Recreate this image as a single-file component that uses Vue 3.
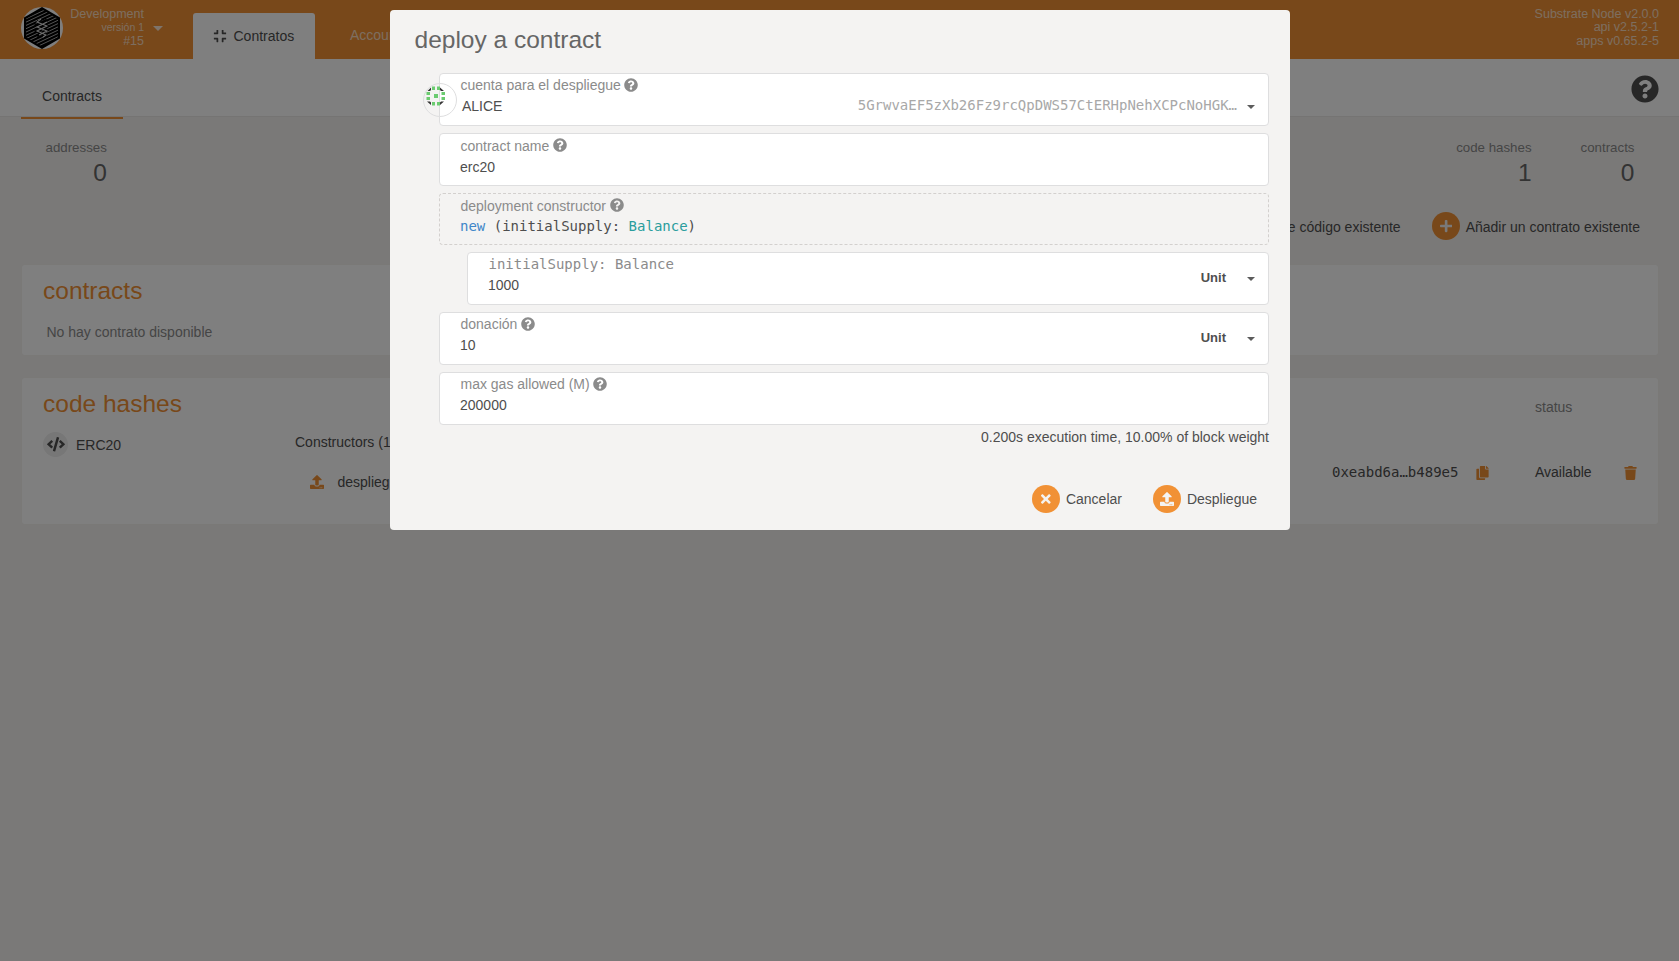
<script setup>
import { h } from 'vue'

const glyphs = {
  help: [512, 'M504 256c0 136.997-111.043 248-248 248S8 392.997 8 256C8 119.083 119.043 8 256 8s248 111.083 248 248zM262.655 90c-54.497 0-89.255 22.957-116.549 63.758-3.536 5.286-2.353 12.415 2.715 16.258l34.699 26.31c5.205 3.947 12.621 3.008 16.665-2.122 17.864-22.658 30.113-35.797 57.303-35.797 20.429 0 45.698 13.148 45.698 32.958 0 14.976-12.363 22.667-32.534 33.976C247.128 238.528 216 254.941 216 296v4c0 6.627 5.373 12 12 12h56c6.627 0 12-5.373 12-12v-1.333c0-28.462 83.186-29.647 83.186-106.667 0-58.002-60.165-102-116.531-102zM256 338c-25.365 0-46 20.635-46 46 0 25.364 20.635 46 46 46s46-20.636 46-46c0-25.365-20.635-46-46-46z'],
  upload: [512, 'M296 384h-80c-13.3 0-24-10.7-24-24V192h-87.7c-17.8 0-26.7-21.5-14.1-34.1L242.3 5.7c7.5-7.5 19.8-7.5 27.3 0l152.2 152.2c12.6 12.6 3.7 34.1-14.1 34.1H320v168c0 13.3-10.7 24-24 24zm216-8v112c0 13.3-10.7 24-24 24H24c-13.3 0-24-10.7-24-24V376c0-13.3 10.7-24 24-24h136v8c0 30.9 25.1 56 56 56h80c30.9 0 56-25.1 56-56v-8h136c13.3 0 24 10.7 24 24zm-124 88c0-11-9-20-20-20s-20 9-20 20 9 20 20 20 20-9 20-20zm64 0c0-11-9-20-20-20s-20 9-20 20 9 20 20 20 20-9 20-20z'],
  times: [352, 'M242.72 256l100.07-100.07c12.28-12.28 12.28-32.19 0-44.48l-22.24-22.24c-12.28-12.28-32.19-12.28-44.48 0L176 189.28 75.93 89.21c-12.28-12.28-32.19-12.28-44.48 0L9.21 111.45c-12.28 12.28-12.28 32.19 0 44.48L109.28 256 9.21 356.07c-12.28 12.28-12.28 32.19 0 44.48l22.24 22.24c12.28 12.28 32.2 12.28 44.48 0L176 322.72l100.07 100.07c12.28 12.28 32.2 12.28 44.48 0l22.24-22.24c12.28-12.28 12.28-32.19 0-44.48L242.72 256z'],
  plus: [448, 'M416 208H272V64c0-17.67-14.33-32-32-32h-32c-17.67 0-32 14.33-32 32v144H32c-17.67 0-32 14.33-32 32v32c0 17.67 14.33 32 32 32h144v144c0 17.67 14.33 32 32 32h32c17.67 0 32-14.33 32-32V304h144c17.67 0 32-14.33 32-32v-32c0-17.67-14.33-32-32-32z'],
  code: [640, 'M278.9 511.5l-61-17.7c-6.4-1.8-10-8.5-8.2-14.9L346.2 8.7c1.8-6.4 8.5-10 14.9-8.2l61 17.7c6.4 1.8 10 8.5 8.2 14.9L293.8 503.3c-1.9 6.4-8.5 10.1-14.9 8.2zm-114-112.2l43.5-46.4c4.6-4.9 4.3-12.7-.8-17.2L117 256l90.6-79.7c5.1-4.5 5.5-12.3.8-17.2l-43.5-46.4c-4.5-4.8-12.1-5.1-17-.5L3.8 247.2c-5.1 4.7-5.1 12.8 0 17.5l144.1 135.1c4.9 4.6 12.5 4.4 17-.5zm327.2.6l144.1-135.1c5.1-4.7 5.1-12.8 0-17.5L492.1 112.1c-4.8-4.5-12.4-4.3-17 .5L431.6 159c-4.6 4.9-4.3 12.7.8 17.2L523 256l-90.6 79.7c-5.1 4.5-5.5 12.3-.8 17.2l43.5 46.4c4.5 4.9 12.1 5.1 17 .6z'],
  copy: [448, 'M320 448v40c0 13.255-10.745 24-24 24H24c-13.255 0-24-10.745-24-24V120c0-13.255 10.745-24 24-24h72v296c0 30.879 25.121 56 56 56h168zm0-344V0H152c-13.255 0-24 10.745-24 24v368c0 13.255 10.745 24 24 24h272c13.255 0 24-10.745 24-24V128H344c-13.2 0-24-10.8-24-24zm120.971-31.029L375.029 7.029A24 24 0 0 0 358.059 0H352v96h96v-6.059a24 24 0 0 0-7.029-16.97z'],
  trash: [448, 'M432 32H312l-9.4-18.7A24 24 0 0 0 281.1 0H166.8a23.72 23.72 0 0 0-21.4 13.3L136 32H16A16 16 0 0 0 0 48v32a16 16 0 0 0 16 16h416a16 16 0 0 0 16-16V48a16 16 0 0 0-16-16zM53.2 467a48 48 0 0 0 47.9 45h245.8a48 48 0 0 0 47.9-45L416 128H32z'],
  compress: [448, 'M436 192H312c-13.3 0-24-10.7-24-24V44c0-6.6 5.4-12 12-12h40c6.6 0 12 5.4 12 12v84h84c6.6 0 12 5.4 12 12v40c0 6.6-5.4 12-12 12zm-276-24V44c0-6.6-5.4-12-12-12h-40c-6.6 0-12 5.4-12 12v84H12c-6.6 0-12 5.4-12 12v40c0 6.6 5.4 12 12 12h124c13.3 0 24-10.7 24-24zm0 300V344c0-13.3-10.7-24-24-24H12c-6.6 0-12 5.4-12 12v40c0 6.6 5.4 12 12 12h84v84c0 6.6 5.4 12 12 12h40c6.6 0 12-5.4 12-12zm192 0v-84h84c6.6 0 12-5.4 12-12v-40c0-6.6-5.4-12-12-12H312c-13.3 0-24 10.7-24 24v124c0 6.6 5.4 12 12 12h40c6.6 0 12-5.4 12-12z'],
}

const Icon = (props) =>
  h('svg', { viewBox: `0 0 ${glyphs[props.name][0]} 512`, fill: 'currentColor' }, [
    h('path', { d: glyphs[props.name][1] }),
  ])
Icon.props = ['name']

const hatch = Array.from({ length: 13 }, (_, i) => 1 + i * 3.3)
</script>

<template>
  <div class="page">
    <header class="topbar">
      <svg class="logo" viewBox="0 0 42 42">
        <defs>
          <clipPath id="hex"><path d="M21 2.5 37 11.7v18.6L21 39.5 5 30.300V11.700Z" /></clipPath>
        </defs>
        <circle cx="21" cy="21" r="21" fill="#fff" />
        <path d="M21 0 39 10.500v21L21 42 3 31.500v-21Z" fill="#000" />
        <g clip-path="url(#hex)" stroke="#bbb" stroke-width=".9">
          <path v-for="y in hatch" :key="y" :d="`M4 ${y + 8}L38 ${y - 8}`" />
        </g>
        <path d="M16 14l10 5-10 5 10 5M26 13l-10 5 10 5-10 6" fill="none" stroke="#000" stroke-width="3" />
        <path d="M20 12l-4 3 10 4-10 5 9 4-3 2M26 15l-10 5 10 4-8 4" fill="none" stroke="#ddd" stroke-width="1.100" />
      </svg>
      <div class="chain">
        <div>Development</div>
        <div class="small">versión 1</div>
        <div>#15</div>
      </div>
      <i class="caret head-caret"></i>
      <div class="app-tab"><Icon name="compress" />Contratos</div>
      <div class="app-link">Accounts</div>
      <div class="versions">
        <div>Substrate Node v2.0.0</div>
        <div>api v2.5.2-1</div>
        <div>apps v0.65.2-5</div>
      </div>
    </header>

    <nav class="subbar">
      <div class="subtab">Contracts</div>
      <Icon name="help" class="big-help" />
    </nav>

    <section class="summary">
      <div class="stat first"><span>addresses</span><b>0</b></div>
      <div class="stat"><span>code hashes</span><b>1</b></div>
      <div class="stat"><span>contracts</span><b>0</b></div>
    </section>

    <div class="actions">
      <button><em><Icon name="plus" /></em><span>Añadir hash de código existente</span></button>
      <button><em><Icon name="plus" /></em><span>Añadir un contrato existente</span></button>
    </div>

    <section class="card contracts">
      <h2>contracts</h2>
      <p>No hay contrato disponible</p>
    </section>

    <section class="card codes">
      <div class="codes-head"><h2>code hashes</h2><span>status</span></div>
      <div class="codes-row">
        <div class="name"><em><Icon name="code" /></em>ERC20</div>
        <div class="ctors">
          <div>Constructors (1)</div>
          <div class="deploy"><Icon name="upload" />despliegue</div>
        </div>
        <div class="hash">0xeabd6a…b489e5<Icon name="copy" /></div>
        <div class="status">Available</div>
        <Icon name="trash" class="trash" />
      </div>
    </section>
  </div>

  <div class="dimmer">
    <div class="modal">
      <h1>deploy a contract</h1>

      <div class="field account">
        <div class="identicon">
          <svg viewBox="0 0 20 20">
            <path d="M1.500 5 5 1.500V4L4 5ZM14 1.500 18 5h-3l-1-1ZM1 15.500h3l1 1V19ZM15 15.500h3L14 19v-2.500Z" fill="#333" />
            <g fill="#6bcb70">
              <rect x="6" y=".5" width="3" height="3.500" /><rect x="11" y=".5" width="3" height="3.500" />
              <rect x="6" y="16" width="3" height="3.500" /><rect x="11" y="16" width="3" height="3.500" />
              <rect x=".5" y="6" width="3.500" height="3" /><rect x=".5" y="11" width="3.500" height="3" />
              <rect x="15.500" y="6" width="3.500" height="3" /><rect x="15.500" y="11" width="3.500" height="3" />
              <rect x="8" y="8" width="4" height="4" />
            </g>
          </svg>
        </div>
        <label>cuenta para el despliegue<Icon name="help" /></label>
        <div class="value">ALICE</div>
        <div class="side"><span class="address">5GrwvaEF5zXb26Fz9rcQpDWS57CtERHpNehXCPcNoHGK…</span><i class="caret"></i></div>
      </div>

      <div class="field low">
        <label>contract name<Icon name="help" /></label>
        <div class="value">erc20</div>
      </div>

      <div class="field static low">
        <label>deployment constructor<Icon name="help" /></label>
        <div class="value mono"><span class="kw">new</span> (initialSupply: <span class="type">Balance</span>)</div>
      </div>

      <div class="field nested">
        <label class="mono">initialSupply: Balance</label>
        <div class="value">1000</div>
        <div class="side"><strong>Unit</strong><i class="caret"></i></div>
      </div>

      <div class="field">
        <label>donación<Icon name="help" /></label>
        <div class="value">10</div>
        <div class="side"><strong>Unit</strong><i class="caret"></i></div>
      </div>

      <div class="field">
        <label>max gas allowed (M)<Icon name="help" /></label>
        <div class="value">200000</div>
      </div>

      <div class="weight">0.200s execution time, 10.00% of block weight</div>

      <div class="modal-actions">
        <button><em><Icon name="times" /></em>Cancelar</button>
        <button><em><Icon name="upload" /></em>Despliegue</button>
      </div>
    </div>
  </div>
</template>

<style>
body {
  margin: 0;
  overflow: hidden;
}
</style>

<style scoped>
* {
  box-sizing: border-box;
}
.page,
.dimmer {
  font: 14px/20px "Liberation Sans", Arial, sans-serif;
  color: #4e4e4e;
}
.page {
  height: 961px;
  background: #f5f3f1;
  overflow: hidden;
}
svg {
  display: block;
  flex: none;
}
h1,
h2,
p {
  margin: 0;
  font-weight: 400;
}
em,
i {
  font-style: normal;
}
.mono,
.hash,
.address {
  font-family: "DejaVu Sans Mono", monospace;
}
.caret {
  border: 4px solid transparent;
  border-top-color: #5c5c5c;
  border-bottom: 0;
}

.topbar {
  height: 59px;
  background: #f19135;
  display: flex;
  padding: 0 20px 0 21px;
  color: rgba(255, 255, 255, 0.7);
}
.logo {
  width: 42px;
  height: 42px;
  margin-top: 7px;
}
.chain,
.versions {
  font-size: 12.500px;
  line-height: 13.400px;
  text-align: right;
  padding-top: 8px;
}
.chain {
  width: 81px;
}
.small {
  font-size: 10.500px;
}
.head-caret {
  align-self: flex-start;
  margin: 26px 0 0 9px;
  border-width: 5px;
  border-bottom: 0;
  border-top-color: rgba(255, 255, 255, 0.8);
}
.app-tab {
  width: 122px;
  height: 46px;
  margin: 13px 0 0 30px;
  background: #fff;
  border-radius: 3px 3px 0 0;
  color: #4e4e4e;
  display: flex;
  padding: 13px 0 0 20px;
}
.app-tab svg {
  width: 14px;
  height: 14px;
  margin: 3px 6.500px 0 0;
}
.app-link {
  margin: 25px 0 0 35px;
}
.versions {
  margin-left: auto;
}

.subbar {
  height: 57px;
  background: #fff;
  box-shadow: 0 1px 0 #ebe9e7;
  display: flex;
  justify-content: space-between;
  padding: 0 20px 0 21px;
}
.subtab {
  width: 102px;
  height: 60px;
  padding-top: 27px;
  text-align: center;
  border-bottom: 2px solid #f19135;
}
.big-help {
  width: 28px;
  height: 28px;
  margin-top: 16px;
}

.summary {
  display: flex;
  gap: 49px;
  padding: 22px 44.500px 0 45.500px;
}
.stat {
  text-align: right;
}
.stat.first {
  margin-right: auto;
}
.stat span {
  display: block;
  font-size: 13.300px;
  line-height: 20px;
  color: #8b8b8b;
}
.stat b {
  display: block;
  font-weight: 400;
  font-size: 24.500px;
  line-height: 30px;
  color: #666;
}
button {
  border: 0;
  padding: 0;
  background: none;
  font: inherit;
  color: inherit;
  display: flex;
  align-items: center;
}
button em {
  width: 28px;
  height: 28px;
  border-radius: 50%;
  background: #f19135;
  color: #f4f3f2;
  display: flex;
  align-items: center;
  justify-content: center;
  margin-right: 6px;
}
button svg {
  height: 14px;
}
.actions {
  display: flex;
  justify-content: flex-end;
  gap: 31px;
  padding: 24px 39px 0 0;
}
.actions span {
  padding-top: 2px;
}

.card {
  margin: 0 21px 0 22px;
  background: #fff;
  box-shadow: 0 0 0 1px #f4f2ef;
  border-radius: 3px;
}
h2 {
  color: #f19135;
  font-size: 24.500px;
  line-height: 30px;
  padding-top: 1px;
}
.contracts {
  margin-top: 25px;
  height: 90px;
  padding: 10px 21px;
}
.contracts p {
  margin: 16px 3.500px 0;
  color: #8b8b8b;
}
.codes {
  margin-top: 23px;
  height: 146px;
  padding: 10px 21px;
}
.codes-head {
  display: flex;
  justify-content: space-between;
}
.codes-head span {
  width: 102px;
  padding-top: 9px;
  color: #8b8b8b;
}
.codes-row {
  display: grid;
  grid-template-columns: 252px 1037px 203px 89px 13px;
  padding-top: 13px;
}
.name {
  display: flex;
  gap: 8px;
  line-height: 26px;
}
.name em {
  width: 25px;
  height: 25px;
  border-radius: 50%;
  background: #eee;
  display: flex;
  align-items: center;
  justify-content: center;
}
.name svg {
  width: 18px;
}
.deploy {
  display: flex;
  padding: 20px 0 0 15px;
}
.deploy svg {
  width: 14px;
  height: 14px;
  margin: 3px 13.500px 0 0;
  color: #f19135;
}
.hash {
  display: flex;
  padding-top: 30px;
}
.hash svg {
  width: 13px;
  height: 14px;
  margin: 4px 0 0 18px;
  color: #f19135;
}
.status {
  padding-top: 30px;
}
.trash {
  width: 13px;
  height: 14px;
  margin-top: 34px;
  color: #f19135;
}

.dimmer {
  position: absolute;
  inset: 0;
  background: rgba(0, 0, 0, 0.5);
  overflow: hidden;
}
.modal {
  width: 900px;
  height: 520px;
  margin: 10px 0 0 390px;
  padding: 15px 21px 0 24.500px;
  background: #f4f3f2;
  border-radius: 4px;
}
h1 {
  font-size: 24.500px;
  line-height: 30px;
  color: #666;
  margin-bottom: 18px;
}
.field {
  position: relative;
  height: 53px;
  margin: 0 0 7px 24.500px;
  padding: 1px 0 0 20.500px;
  background: #fff;
  border: 1px solid #dededf;
  border-radius: 4px;
}
.field label {
  display: flex;
  color: #8b8b8b;
  line-height: 20px;
}
.field label svg {
  width: 14px;
  height: 14px;
  margin: 3px 0 0 3.500px;
}
.value {
  margin: 1px 0 0 -0.500px;
}
.account .value {
  margin-left: 1.500px;
}
.low {
  padding-top: 2px;
}
.low label svg {
  margin-top: 2px;
}
.static {
  background: transparent;
  border: 1px dashed #d3d0ce;
  height: 52px;
}
.static .value {
  margin-top: 0;
}
.nested {
  margin-left: 52.500px;
}
.kw {
  color: #3f87c9;
}
.type {
  color: #2a9d9d;
}
.side {
  position: absolute;
  top: 15px;
  right: 13px;
  display: flex;
  align-items: center;
}
.side .caret {
  margin-top: 1px;
}
.side strong {
  font-size: 13px;
  margin-right: 21px;
}
.account .side {
  top: 21px;
}
.account .side .caret {
  margin-top: 3px;
}
.address {
  color: #a8a8a8;
  margin-right: 10px;
}
.identicon {
  position: absolute;
  left: -17px;
  top: 9px;
  width: 34px;
  height: 34px;
  border: 1px solid #dededf;
  border-radius: 50%;
}
.identicon svg {
  width: 20px;
  height: 20px;
  margin: 2px;
}
.weight {
  text-align: right;
  margin-top: -5px;
}
.modal-actions {
  display: flex;
  justify-content: flex-end;
  gap: 31px;
  padding: 38px 12px 0 0;
}
</style>
